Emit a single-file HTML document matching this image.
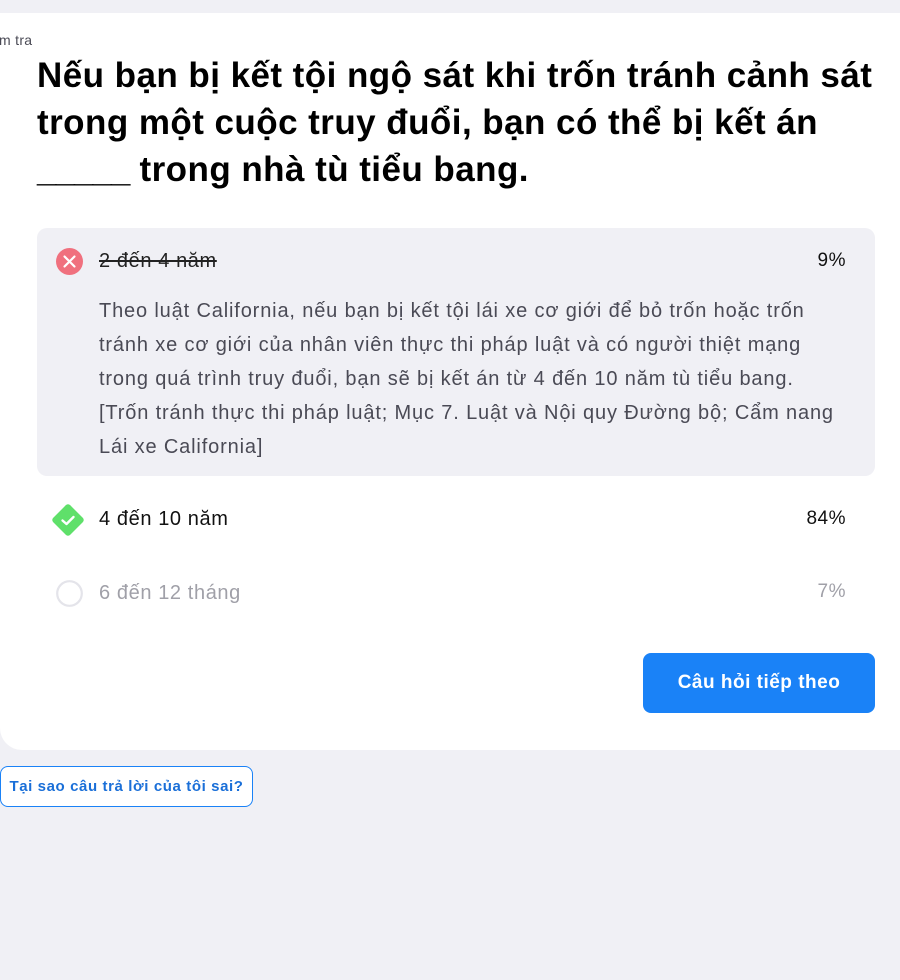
<!DOCTYPE html>
<html><head><meta charset="utf-8"><style>
body{margin:0;width:900px;height:980px;background:#f0f0f5;font-family:"Liberation Sans",sans-serif;position:relative;overflow:hidden}
.card{position:absolute;left:0;top:13px;width:920px;height:737px;background:#fff;border-radius:0 0 0 22px}
.crumb{position:absolute;left:-1px;top:32px;font-size:14px;color:#4a4a55;letter-spacing:0.3px}
h1{position:absolute;left:37px;top:52px;margin:0;width:880px;font-size:35px;line-height:47px;font-weight:bold;color:#000;letter-spacing:0.45px;white-space:nowrap}
.box{position:absolute;left:37px;top:228px;width:838px;height:248px;background:#f0f0f5;border-radius:10px}
.opt{position:absolute;font-size:20px;letter-spacing:0.6px}
.pct{position:absolute;right:54px;font-size:19px;letter-spacing:0.5px}
.expl{position:absolute;left:99px;top:294px;width:800px;font-size:20px;line-height:34px;color:#4a4a55;letter-spacing:0.85px;white-space:nowrap}
.btn{position:absolute;left:643px;top:653px;width:232px;height:60px;background:#1a82f7;border-radius:8px;color:#fff;font-weight:bold;font-size:19px;text-align:center;line-height:60px;letter-spacing:0.5px}
.why{position:absolute;left:0;top:766px;width:251px;height:39px;border:1px solid #1a82f7;border-radius:8px;color:#1a6fd8;font-weight:bold;font-size:15px;line-height:39px;text-align:center;background:#fff;letter-spacing:0.6px}
</style></head><body>
<div class="card"></div>
<div class="crumb">m tra</div>
<h1>Nếu bạn bị kết tội ngộ sát khi trốn tránh cảnh sát<br>trong một cuộc truy đuổi, bạn có thể bị kết án<br><span style="letter-spacing:-1px">_____</span> trong nhà tù tiểu bang.</h1>
<div class="box"></div>
<svg style="position:absolute;left:56px;top:248px" width="27" height="27"><circle cx="13.5" cy="13.5" r="13.5" fill="#f0707e"/><path d="M8.5 8.5l10 10M18.5 8.5l-10 10" stroke="#fff" stroke-width="2.2" stroke-linecap="round"/></svg>
<div class="opt" style="left:99px;top:250px;color:#222;text-decoration:line-through">2 đến 4 năm</div>
<div class="pct" style="top:250px;color:#111">9%</div>
<div class="expl">Theo luật California, nếu bạn bị kết tội lái xe cơ giới để bỏ trốn hoặc trốn<br>tránh xe cơ giới của nhân viên thực thi pháp luật và có người thiệt mạng<br>trong quá trình truy đuổi, bạn sẽ bị kết án từ 4 đến 10 năm tù tiểu bang.<br>[Trốn tránh thực thi pháp luật; Mục 7. Luật và Nội quy Đường bộ; Cẩm nang<br>Lái xe California]</div>
<svg style="position:absolute;left:49px;top:501px" width="38" height="38"><rect x="7" y="7" width="24" height="24" rx="3" fill="#5fe06a" transform="rotate(45 19 19)"/><path d="M13.5 19.5l4 3.5 7-7" stroke="#fff" stroke-width="2.4" fill="none" stroke-linecap="round" stroke-linejoin="round"/></svg>
<div class="opt" style="left:99px;top:508px;color:#111">4 đến 10 năm</div>
<div class="pct" style="top:508px;color:#111">84%</div>
<svg style="position:absolute;left:56px;top:580px" width="27" height="27"><circle cx="13.5" cy="13.5" r="12.3" fill="none" stroke="#e4e4ea" stroke-width="2.2"/></svg>
<div class="opt" style="left:99px;top:582px;color:#a0a0a8">6 đến 12 tháng</div>
<div class="pct" style="top:581px;color:#a0a0a8">7%</div>
<div class="btn">Câu hỏi tiếp theo</div>
<div class="why">Tại sao câu trả lời của tôi sai?</div>
</body></html>
